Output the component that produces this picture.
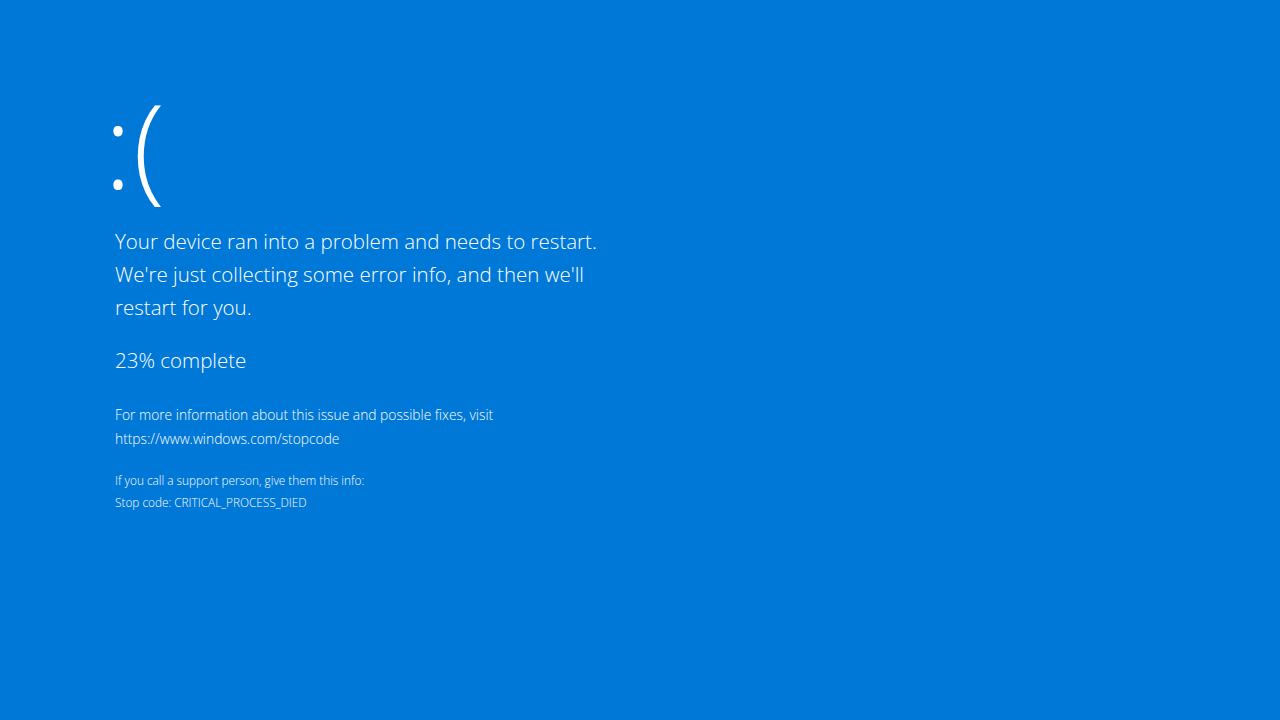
import React from 'react';

const App: React.FC = () => {
  return (
    <div
      className="w-[1280px] h-[720px] bg-[#0078d7] text-white overflow-hidden"
      style={{ fontFamily: '"Open Sans", "Noto Sans", sans-serif' }}
    >
      <div className="pl-[104px] pt-[74px]">
        {/* sad face */}
        <div className="text-[117px] leading-[140px] font-light tracking-[1px]">:(</div>

        <div className="pl-[11px] mt-[11px]">
          <p className="text-[20.5px] leading-[33px] font-light">
            Your device ran into a problem and needs to restart.
            <br />
            We're just collecting some error info, and then we'll
            <br />
            restart for you.
          </p>

          <p className="text-[20.5px] leading-[33px] font-light mt-[20px]">23% complete</p>

          <div className="mt-[26px] text-[13.8px] leading-[24px] font-light">
            <p>For more information about this issue and possible fixes, visit</p>
            <p>https://www.windows.com/stopcode</p>
          </div>

          <div className="mt-[18px] text-[11.8px] leading-[22px] font-light">
            <p>If you call a support person, give them this info:</p>
            <p>Stop code: CRITICAL_PROCESS_DIED</p>
          </div>
        </div>
      </div>
    </div>
  );
};

export default App;
